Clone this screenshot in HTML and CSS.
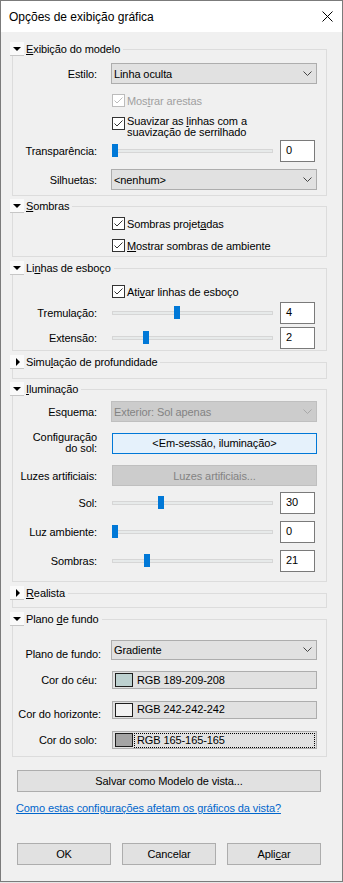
FILE: index.html
```html
<!DOCTYPE html>
<html lang="pt">
<head>
    <meta charset="UTF-8">
    <meta name="viewport" content="width=device-width, initial-scale=1.0">
    <title>Opções de exibição gráfica</title>
    <link rel="stylesheet" href="styles.css">
</head>
<body>

<div class="window">
    <div class="titlebar">
        <span class="title">Opções de exibição gráfica</span>
        <svg class="close" width="11" height="11" viewBox="0 0 11 11"><path d="M0.5 0.5 L10.5 10.5 M10.5 0.5 L0.5 10.5" stroke="#000" stroke-width="1" fill="none"/></svg>
    </div>

    <div class="content">

        <!-- Exibição do modelo -->
        <fieldset class="group pb-5">
            <legend><span class="toggle"><span class="tri-down"></span></span><span><u>E</u>xibição do modelo</span></legend>
            <div class="row mt-7">
                <label>Estilo:</label>
                <div class="select h21"><span>Linha oculta</span><svg class="chev" width="9" height="5" viewBox="0 0 9 5"><polyline points="0.5,0.5 4.5,4.5 8.5,0.5" fill="none" stroke="#444"/></svg></div>
            </div>
            <div class="check mt-10 disabled">
                <svg class="cb" width="13" height="13" viewBox="0 0 13 13"><rect x="0.5" y="0.5" width="12" height="12" fill="#fff" stroke="#bcbcbc"/><polyline points="2.5,6.5 5,9 10.5,3.5" fill="none" stroke="#bcbcbc"/></svg>
                <span>Mos<u>t</u>rar arestas</span>
            </div>
            <div class="check top mt-9">
                <svg class="cb" width="13" height="13" viewBox="0 0 13 13"><rect x="0.5" y="0.5" width="12" height="12" fill="#fff" stroke="#333"/><polyline points="2.5,6.5 5,9 10.5,3.5" fill="none" stroke="#333"/></svg>
                <span class="two-lines">Suavizar as <u>l</u>inhas com a<br>suavização de serrilhado</span>
            </div>
            <div class="row mt-2">
                <label>Transparência:</label>
                <div class="slider-box">
                    <div class="slider"><div class="track"></div><div class="thumb" style="left: 0px"></div></div>
                    <div class="num">0</div>
                </div>
            </div>
            <div class="row mt-7">
                <label>Silhuetas:</label>
                <div class="select h21"><span>&lt;nenhum&gt;</span><svg class="chev" width="9" height="5" viewBox="0 0 9 5"><polyline points="0.5,0.5 4.5,4.5 8.5,0.5" fill="none" stroke="#444"/></svg></div>
            </div>
        </fieldset>

        <!-- Sombras -->
        <fieldset class="group mt-3 pb-4">
            <legend><span class="toggle"><span class="tri-down"></span></span><span><u>S</u>ombras</span></legend>
            <div class="check mt-4">
                <svg class="cb" width="13" height="13" viewBox="0 0 13 13"><rect x="0.5" y="0.5" width="12" height="12" fill="#fff" stroke="#333"/><polyline points="2.5,6.5 5,9 10.5,3.5" fill="none" stroke="#333"/></svg>
                <span>Sombras projet<u>a</u>das</span>
            </div>
            <div class="check mt-9">
                <svg class="cb" width="13" height="13" viewBox="0 0 13 13"><rect x="0.5" y="0.5" width="12" height="12" fill="#fff" stroke="#333"/><polyline points="2.5,6.5 5,9 10.5,3.5" fill="none" stroke="#333"/></svg>
                <span><u>M</u>ostrar sombras de ambiente</span>
            </div>
        </fieldset>

        <!-- Linhas de esboço -->
        <fieldset class="group mt-4 pb-1">
            <legend><span class="toggle"><span class="tri-down"></span></span><span>Li<u>n</u>has de esboço</span></legend>
            <div class="check mt-10">
                <svg class="cb" width="13" height="13" viewBox="0 0 13 13"><rect x="0.5" y="0.5" width="12" height="12" fill="#fff" stroke="#333"/><polyline points="2.5,6.5 5,9 10.5,3.5" fill="none" stroke="#333"/></svg>
                <span>Ati<u>v</u>ar linhas de esboço</span>
            </div>
            <div class="row mt-4">
                <label>Tremulação:</label>
                <div class="slider-box">
                    <div class="slider"><div class="track"></div><div class="thumb" style="left: 62px"></div></div>
                    <div class="num">4</div>
                </div>
            </div>
            <div class="row mt-3">
                <label>Extensão:</label>
                <div class="slider-box">
                    <div class="slider"><div class="track"></div><div class="thumb" style="left: 31px"></div></div>
                    <div class="num">2</div>
                </div>
            </div>
        </fieldset>

        <!-- Simulação de profundidade -->
        <fieldset class="group mt-4 pb-9">
            <legend><span class="toggle"><span class="tri-right"></span></span><span>Simu<u>l</u>ação de profundidade</span></legend>
        </fieldset>

        <!-- Iluminação -->
        <fieldset class="group mt-3 pb-9">
            <legend><span class="toggle"><span class="tri-down"></span></span><span><u>I</u>luminação</span></legend>
            <div class="row mt-5">
                <label>Esquema:</label>
                <div class="select h21 off"><span>Exterior: Sol apenas</span><svg class="chev" width="9" height="5" viewBox="0 0 9 5"><polyline points="0.5,0.5 4.5,4.5 8.5,0.5" fill="none" stroke="#a8a8a8"/></svg></div>
            </div>
            <div class="row mt-10">
                <label class="two-lines">Configuração<br>do sol:</label>
                <div class="btn sun">&lt;Em-sessão, iluminação&gt;</div>
            </div>
            <div class="row mt-11">
                <label>Luzes artificiais:</label>
                <div class="btn off">Luzes artificiais...</div>
            </div>
            <div class="row mt-6">
                <label>Sol:</label>
                <div class="slider-box">
                    <div class="slider"><div class="track"></div><div class="thumb" style="left: 46px"></div></div>
                    <div class="num">30</div>
                </div>
            </div>
            <div class="row mt-7">
                <label>Luz ambiente:</label>
                <div class="slider-box">
                    <div class="slider"><div class="track"></div><div class="thumb" style="left: 0px"></div></div>
                    <div class="num">0</div>
                </div>
            </div>
            <div class="row mt-7">
                <label>Sombras:</label>
                <div class="slider-box">
                    <div class="slider"><div class="track"></div><div class="thumb" style="left: 32px"></div></div>
                    <div class="num">21</div>
                </div>
            </div>
        </fieldset>

        <!-- Realista -->
        <fieldset class="group mt-4 pb-7">
            <legend><span class="toggle"><span class="tri-right"></span></span><span><u>R</u>ealista</span></legend>
        </fieldset>

        <!-- Plano de fundo -->
        <fieldset class="group mt-4 pb-7">
            <legend><span class="toggle"><span class="tri-down"></span></span><span>Plano <u>d</u>e fundo</span></legend>
            <div class="row mt-13">
                <label class="low">Plano de fundo:</label>
                <div class="select h20"><span>Gradiente</span><svg class="chev" width="9" height="5" viewBox="0 0 9 5"><polyline points="0.5,0.5 4.5,4.5 8.5,0.5" fill="none" stroke="#444"/></svg></div>
            </div>
            <div class="row mt-11">
                <label>Cor do céu:</label>
                <div class="btn color"><span class="swatch" style="background: rgb(189, 209, 208)"></span><span class="rgb">RGB 189-209-208</span></div>
            </div>
            <div class="row mt-10">
                <label class="low">Cor do horizonte:</label>
                <div class="btn color"><span class="swatch" style="background: rgb(242, 242, 242)"></span><span class="rgb">RGB 242-242-242</span></div>
            </div>
            <div class="row mt-11">
                <label>Cor do solo:</label>
                <div class="btn color"><span class="swatch" style="background: rgb(165, 165, 165)"></span><span class="rgb focus">RGB 165-165-165</span></div>
            </div>
        </fieldset>

        <div class="btn save"><span>Salvar como Modelo de vista...</span></div>

        <a class="help" href="#">Como estas configurações afetam os gráficos da vista?</a>

        <div class="actions">
            <div class="btn"><span>OK</span></div>
            <div class="btn"><span>Cancelar</span></div>
            <div class="btn"><span>Apli<u>c</u>ar</span></div>
        </div>
    </div>
</div>

</body>
</html>
```

FILE: styles.css
```css
body {
    margin: 0;
    background-color: #e6e6e6;
    font-family: "Liberation Sans", Arial, sans-serif;
    font-size: 11px;
    color: #000;
}
.window {
    width: 343px;
    height: 882px;
    box-sizing: border-box;
    border: 1px solid #7b7b7b;
    background-color: #f0f0f0;
}

/* Title bar */
.titlebar {
    height: 31px;
    background-color: #fff;
    display: flex;
    align-items: center;
    justify-content: space-between;
    padding: 0 9px 0 8px;
}
.title {
    font-size: 12px;
}
.close {
    display: block;
}

.content {
    padding: 10px 0 0 11px;
    letter-spacing: -0.1px;
}

/* Groups */
.group {
    width: 315px;
    box-sizing: border-box;
    margin: 0;
    padding: 0 9px 0 0;
    border: 1px solid #dcdcdc;
    min-width: 0;
}
.group legend {
    margin-left: -3px;
    padding: 0 3px 0 0;
    height: 14px;
    line-height: 14px;
    display: flex;
    align-items: center;
    gap: 2px;
    background-color: #f0f0f0;
}
.toggle {
    width: 14px;
    height: 13px;
    background-color: #fafafa;
    border-bottom: 1px solid #c6c6c6;
    display: flex;
    align-items: center;
    justify-content: center;
}
.tri-down {
    width: 0;
    height: 0;
    border-left: 4px solid transparent;
    border-right: 4px solid transparent;
    border-top: 4px solid #000;
}
.tri-right {
    width: 0;
    height: 0;
    border-top: 4px solid transparent;
    border-bottom: 4px solid transparent;
    border-left: 4px solid #000;
    margin-left: 1px;
}

/* Rows */
.row {
    display: grid;
    grid-template-columns: 84px 206px;
    column-gap: 14px;
    align-items: center;
}
.row label {
    text-align: right;
    white-space: nowrap;
}
.row label.low {
    padding-top: 9px;
    margin-right: -4px;
}
.two-lines {
    line-height: 11px;
}

.check {
    display: flex;
    align-items: center;
    gap: 2px;
    padding-left: 99px;
    height: 13px;
}
.check.top {
    align-items: flex-start;
    height: auto;
}
.check.top .cb {
    margin-top: 1px;
}
.cb {
    display: block;
    flex: none;
}
.check.disabled {
    color: #a0a0a0;
}

/* Combo boxes */
.select {
    box-sizing: border-box;
    border: 1px solid #adadad;
    background-color: #e1e1e1;
    display: flex;
    align-items: center;
    justify-content: space-between;
    padding: 0 4px 0 2px;
}
.h21 {
    height: 21px;
}
.h20 {
    height: 20px;
}
.select.off {
    background-color: #cccccc;
    border-color: #bfbfbf;
    color: #838383;
}
.chev {
    display: block;
}

/* Sliders */
.slider-box {
    display: flex;
    align-items: center;
    gap: 7px;
    margin-left: 1px;
}
.slider {
    position: relative;
    width: 161px;
    height: 22px;
    display: flex;
    align-items: center;
}
.track {
    width: 100%;
    height: 2px;
    background-color: #e7eaea;
    border: 1px solid #d6d6d6;
}
.thumb {
    position: absolute;
    top: 4px;
    width: 6px;
    height: 13px;
    background-color: #0078d7;
}
.num {
    width: 35px;
    height: 22px;
    box-sizing: border-box;
    border: 1px solid #7a7a7a;
    background-color: #fff;
    padding: 0 0 0 5px;
    line-height: 18px;
}

/* Buttons */
.btn {
    box-sizing: border-box;
    height: 22px;
    border: 1px solid #adadad;
    background-color: #e1e1e1;
    display: flex;
    align-items: center;
    justify-content: center;
}
.row .btn {
    margin-left: 1px;
    height: 21px;
}
.btn.sun {
    background-color: #e5f1fb;
    border-color: #0078d7;
}
.btn.off {
    background-color: #cccccc;
    border-color: #bfbfbf;
    color: #838383;
}
.row .btn.color {
    height: 18px;
    justify-content: flex-start;
    padding-left: 2px;
}
.swatch {
    width: 18px;
    height: 14px;
    box-sizing: border-box;
    border: 1px solid #1e1e1e;
    flex: none;
}
.rgb {
    padding-left: 4px;
    line-height: 13px;
}
.rgb.focus {
    flex: 1;
    margin: 0 2px 0 2px;
    padding-left: 2px;
    outline: 1px dotted #000;
}

.save {
    width: 304px;
    margin: 13px 0 0 5px;
}
.help {
    display: block;
    margin: 9px 0 0 4px;
    line-height: 14px;
    color: #0066cc;
}
.actions {
    display: flex;
    gap: 11px;
    margin: 28px 0 0 5px;
}
.actions .btn {
    width: 94px;
}

/* spacing */
.mt-2 { margin-top: 2px; }
.mt-3 { margin-top: 3px; }
.mt-4 { margin-top: 4px; }
.mt-5 { margin-top: 5px; }
.mt-6 { margin-top: 6px; }
.mt-7 { margin-top: 7px; }
.mt-9 { margin-top: 9px; }
.mt-10 { margin-top: 10px; }
.mt-11 { margin-top: 11px; }
.mt-13 { margin-top: 13px; }
.pb-1 { padding-bottom: 1px; }
.pb-4 { padding-bottom: 4px; }
.pb-5 { padding-bottom: 5px; }
.pb-7 { padding-bottom: 7px; }
.pb-9 { padding-bottom: 9px; }
```
